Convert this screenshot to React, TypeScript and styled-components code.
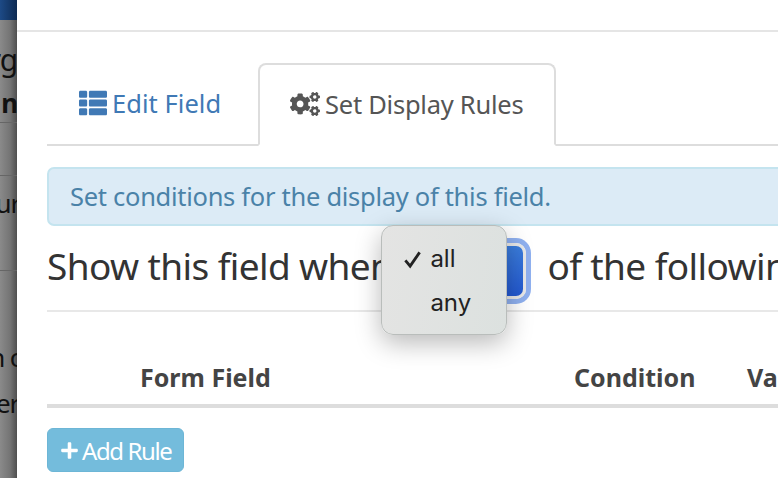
import * as React from "react";
import styled, { createGlobalStyle } from "styled-components";
import { FaCogs, FaPlus, FaThList } from "react-icons/fa";

const GlobalStyle = createGlobalStyle`
  html, body {
    margin: 0;
    padding: 0;
    background: #fff;
  }
  body {
    font-family: "Noto Sans", "Open Sans", sans-serif;
    color: #333;
  }
`;

const Page = styled.div`
  display: flex;
  width: 778px;
  height: 478px;
  overflow: hidden;
`;

const Backdrop = styled.aside`
  flex: 0 0 17px;
  display: flex;
  flex-direction: column;
  overflow: hidden;
  background: linear-gradient(90deg, #8a8a8a 0%, #747474 60%, #4f4f4f 100%);
  color: #111;
`;

const NavStrip = styled.div`
  flex: 0 0 20px;
  background: linear-gradient(90deg, #1d4a86, #0d2a52);
`;

const Fragment = styled.div<{ $top: number; $size: number; $bold?: boolean; $bleed?: number }>`
  display: flex;
  justify-content: flex-end;
  white-space: nowrap;
  margin-top: ${(p) => p.$top}px;
  margin-right: ${(p) => -(p.$bleed ?? 0)}px;
  height: ${(p) => p.$size + 4}px;
  line-height: ${(p) => p.$size + 4}px;
  font-size: ${(p) => p.$size}px;
  font-weight: ${(p) => (p.$bold ? 700 : 400)};
  letter-spacing: -1.2px;
`;

const BackdropRule = styled.div<{ $top: number }>`
  flex: none;
  height: 1px;
  margin-top: ${(p) => p.$top}px;
  background: #666;
`;

const Modal = styled.main`
  flex: 1;
  min-width: 0;
  overflow: hidden;
  background: #fff;
`;

const ModalHeader = styled.div`
  height: 30px;
  border-bottom: 2px solid #e5e5e5;
`;

const ModalBody = styled.div`
  width: 900px;
  padding: 31px 0 0 30px;
`;

const Tabs = styled.div`
  display: flex;
  align-items: flex-end;
  height: 81px;
  border-bottom: 2px solid #ddd;
`;

const Tab = styled.div<{ $active?: boolean }>`
  display: flex;
  align-items: center;
  box-sizing: border-box;
  gap: 5px;
  height: ${(p) => (p.$active ? "83px" : "81px")};
  margin-bottom: ${(p) => (p.$active ? "-2px" : "0")};
  padding: 0 0 2px 30px;
  border: 2px solid ${(p) => (p.$active ? "#ddd" : "transparent")};
  border-bottom-color: ${(p) => (p.$active ? "#fff" : "transparent")};
  border-radius: 8px 8px 0 0;
  background: #fff;
  color: ${(p) => (p.$active ? "#555" : "#4079b5")};
  font-size: 25.5px;
  letter-spacing: ${(p) => (p.$active ? "-0.25px" : "0.05px")};
  width: ${(p) => (p.$active ? "298px" : "211px")};

  svg {
    flex: none;
    font-size: ${(p) => (p.$active ? "30px" : "28px")};
  }
`;

const Alert = styled.div`
  box-sizing: border-box;
  height: 59px;
  margin-top: 21px;
  padding: 0 0 2px 21px;
  display: flex;
  align-items: center;
  background: #dcebf6;
  border: 2px solid #c4e4ef;
  border-radius: 7px;
  color: #4a82a8;
  font-size: 25.5px;
  letter-spacing: -0.29px;
`;

const Heading = styled.h3`
  display: flex;
  align-items: center;
  box-sizing: content-box;
  height: 78px;
  margin: 0;
  padding-bottom: 6px;
  border-bottom: 2px solid #e8e8e8;
  font-size: 37px;
  font-weight: 400;
  letter-spacing: -0.6px;
  white-space: nowrap;
  color: #333;
`;

const SelectWrap = styled.span`
  position: relative;
  display: inline-block;
  flex: none;
  width: 146px;
  height: 56px;
  margin: 12px 21px 0 -12px;
`;

const FakeSelect = styled.span`
  position: absolute;
  right: 0;
  top: 0;
  bottom: 0;
  width: 60px;
  box-sizing: border-box;
  border-radius: 10px;
  background: linear-gradient(180deg, #3b7ddc, #2358d0);
  border: 3px solid #e8e8e8;
  box-shadow: 0 0 0 5px #8fb0ef;
`;

const Popup = styled.div`
  position: absolute;
  left: 1px;
  top: -18px;
  box-sizing: border-box;
  width: 126px;
  height: 110px;
  padding-top: 11px;
  border: 1px solid #b9bdbb;
  border-radius: 12px;
  background: linear-gradient(100deg, #e4e4e3, #dce1df);
  box-shadow: 0 8px 26px rgba(0, 0, 0, 0.28);
  font-family: "Inter", "Liberation Sans", sans-serif;
  font-size: 24px;
  letter-spacing: 0;
  color: #222;
`;

const PopupItem = styled.div`
  position: relative;
  height: 44px;
  line-height: 44px;
  padding-left: 48px;
`;

const Check = styled.svg`
  position: absolute;
  left: 21px;
  top: 13px;
  width: 19px;
  height: 19px;
`;

const RuleHead = styled.div`
  display: grid;
  grid-template-columns: 93px 434px 173px 1fr;
  align-items: end;
  height: 96px;
  box-sizing: border-box;
  padding-bottom: 10px;
  border-bottom: 4px solid #ddd;
`;

const RuleHeadCell = styled.div`
  font-size: 25px;
  font-weight: 700;
  letter-spacing: 0;
  color: #444;
  white-space: nowrap;
`;

const AddButton = styled.button`
  display: flex;
  align-items: center;
  gap: 3px;
  box-sizing: border-box;
  width: 137px;
  height: 44px;
  margin-top: 20px;
  padding: 0 0 0 12px;
  border: 1px solid #6db6d6;
  border-radius: 6px;
  background: #74bcdc;
  color: #fff;
  font-family: inherit;
  font-size: 24px;
  letter-spacing: -1.4px;

  svg {
    flex: none;
    font-size: 19px;
  }
`;

const App = () => (
  <Page>
    <GlobalStyle />
    <Backdrop>
      <NavStrip />
      <Fragment $top={23} $size={30}>rg</Fragment>
      <Fragment $top={11} $size={26} $bold>n</Fragment>
      <BackdropRule $top={4} />
      <BackdropRule $top={52} />
      <Fragment $top={12} $size={26} $bleed={3}>ur</Fragment>
      <BackdropRule $top={52} />
      <Fragment $top={71} $size={26} $bleed={4}>n c</Fragment>
      <Fragment $top={16} $size={26} $bleed={2}>ver</Fragment>
    </Backdrop>
    <Modal>
      <ModalHeader />
      <ModalBody>
        <Tabs>
          <Tab>
            <FaThList />
            Edit Field
          </Tab>
          <Tab $active>
            <FaCogs />
            Set Display Rules
          </Tab>
        </Tabs>
        <Alert>Set conditions for the display of this field.</Alert>
        <Heading>
          Show this field when
          <SelectWrap>
            <FakeSelect />
            <Popup>
              <PopupItem>
                <Check viewBox="0 0 20 20">
                  <path d="M2.5 11 L7.5 17 L17.5 2.5" fill="none" stroke="#222" strokeWidth="3" />
                </Check>
                all
              </PopupItem>
              <PopupItem>any</PopupItem>
            </Popup>
          </SelectWrap>
          of the following
        </Heading>
        <RuleHead>
          <span />
          <RuleHeadCell>Form Field</RuleHeadCell>
          <RuleHeadCell>Condition</RuleHeadCell>
          <RuleHeadCell>Value</RuleHeadCell>
        </RuleHead>
        <AddButton>
          <FaPlus />
          Add Rule
        </AddButton>
      </ModalBody>
    </Modal>
  </Page>
);

export default App;
